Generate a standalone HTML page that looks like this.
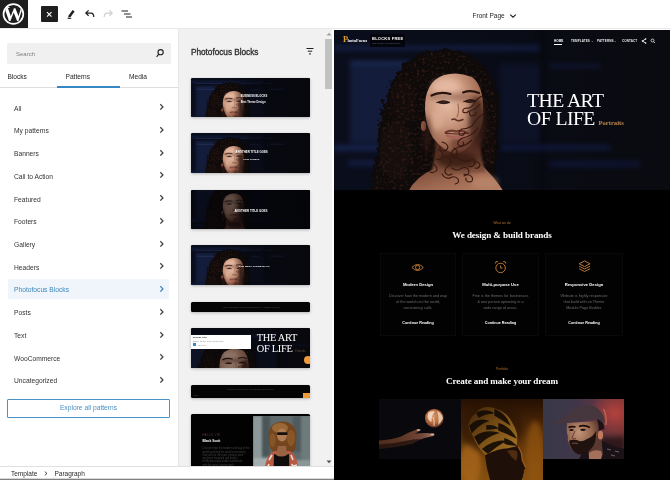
<!DOCTYPE html>
<html><head><meta charset="utf-8">
<style>
*{box-sizing:border-box;margin:0;padding:0}
html{background:#fff}
body{will-change:transform}
html,body{width:670px;height:480px;overflow:hidden;font-family:"Liberation Sans",sans-serif;color:#1e1e1e}
.abs{position:absolute}
#toolbar{position:absolute;left:0;top:0;width:670px;height:29px;background:#fff;border-bottom:1px solid #e9e9e9}
#wp{position:absolute;left:0;top:0;width:28px;height:28px;background:#1e1e1e}
#close{position:absolute;left:41px;top:5.500px;width:16.500px;height:16.500px;background:#1e1e1e;border-radius:1px}
#fp{position:absolute;left:472.500px;top:12.200px;font-size:6.500px;color:#1e1e1e;letter-spacing:0}
#left{position:absolute;left:0;top:30px;width:178px;height:436px;background:#fff}
#search{position:absolute;left:7px;top:12.500px;width:163.500px;height:21px;background:#f0f0f0;border-radius:1px}
#search span{position:absolute;left:9px;top:8px;font-size:6px;color:#808080}
.tab{position:absolute;top:42.600px;font-size:6.600px;color:#1e1e1e}
#tabline{position:absolute;left:0;top:57px;width:178px;height:1px;background:#ddd}
#tabul{position:absolute;left:57px;top:56.200px;width:63px;height:1.600px;background:#3787c2}
.cat{position:absolute;left:14px;width:150px;font-size:6.700px;color:#333;height:10px;line-height:10px}
.chev{position:absolute;left:158px;width:6px;height:8px}
#sel{position:absolute;left:8px;top:248.500px;width:161px;height:20px;background:#eff5fa}
#explore{position:absolute;left:7px;top:369px;width:163px;height:18.500px;border:1px solid #4a93c6;border-radius:1px;font-size:6.700px;color:#4a90c2;text-align:center;line-height:16px}
#pp{position:absolute;left:178px;top:30px;width:154px;height:436px;background:#f1f1f1;border-left:1px solid #e6e6e6;overflow:hidden}
#pp h2{position:absolute;left:12px;top:16.500px;font-size:8.300px;font-weight:normal;color:#2c2c2c;letter-spacing:-.05px;-webkit-text-stroke:.3px #2c2c2c}
.thumb{position:absolute;left:12.300px;width:119px;background:#0a0b10;border-radius:1.5px;overflow:hidden;box-shadow:0 1px 3px rgba(0,0,0,.25)}
#sb{position:absolute;left:145px;top:0;width:9px;height:436px;background:#f1f1f1}
#sbt{position:absolute;left:1px;top:9px;width:7px;height:50px;background:#c1c1c1}
#canvas{position:absolute;left:334px;top:30px;width:336px;height:450px;background:#000;overflow:hidden}
#hero{position:absolute;left:0;top:0;width:336px;height:160px;background:#0a0d18;overflow:hidden}
#foot{position:absolute;left:0;top:466px;width:334px;height:14px;background:#fff;border-top:1px solid #e0e0e0;font-size:6.5px;color:#2a2a2a}
.ht{font-family:"Liberation Serif",serif;font-size:19.700px;line-height:20px;color:#fff;letter-spacing:-.55px;white-space:nowrap}
.nav{top:8.800px;font-size:3px;font-weight:bold;color:#e8e8e8;white-space:nowrap;letter-spacing:.1px}
.ot{font-size:3.050px;color:#bc7634;text-align:center;line-height:4px;letter-spacing:.1px}
.st{font-family:"Liberation Serif",serif;font-weight:bold;font-size:9.150px;line-height:12px;color:#fff;text-align:center;letter-spacing:-.1px;white-space:nowrap}
.card{position:absolute;top:222.500px;height:83px;border:1px solid #090909;background:#020202}
.ct{font-size:4.200px;line-height:6px;font-weight:bold;color:#fff;text-align:center;white-space:nowrap}
.cd{font-size:3.750px;line-height:6.400px;color:#6e6e6e;text-align:center;white-space:nowrap}
.tt{color:#fff;font-weight:bold;white-space:nowrap;letter-spacing:.05px;line-height:4px;text-align:center}
.t6{font-family:"Liberation Serif",serif;font-size:10.400px;line-height:11px;color:#fff;letter-spacing:-.3px;white-space:nowrap}
</style></head><body>
<div id="toolbar">
 <div id="wp"><svg width="28" height="28" viewBox="0 0 28 28"><defs><clipPath id="wc"><circle cx="13.400" cy="14" r="9.300"/></clipPath></defs><circle cx="13.400" cy="14" r="9.900" fill="none" stroke="#fff" stroke-width="1.700"/><text clip-path="url(#wc)" x="13.400" y="21.200" text-anchor="middle" font-family="Liberation Serif, serif" font-weight="bold" font-size="21" fill="#fff">W</text></svg></div>
 <div id="close"><svg width="17" height="17" viewBox="0 0 17 17"><path d="M6 6.200 L10.500 10.700 M10.500 6.200 L6 10.700" stroke="#fff" stroke-width="1.100" fill="none"/></svg></div>
 <svg class="abs" style="left:66px;top:8px" width="10" height="12" viewBox="0 0 10 12"><path d="M2.600 7.400 L6.600 2 L8.600 3.500 L4.600 8.900 L2.200 9.600 Z" fill="#1e1e1e"/><path d="M1.600 10.300 L5.200 10.300" stroke="#1e1e1e" stroke-width="1.100"/></svg>
 <svg class="abs" style="left:84px;top:9px" width="12" height="10" viewBox="0 0 12 10"><path d="M4.6 1.4 L1.8 4.1 L4.6 6.8 M1.8 4.1 L7 4.1 Q9.8 4.3 9.8 8" fill="none" stroke="#1e1e1e" stroke-width="1.2"/></svg>
 <svg class="abs" style="left:102px;top:9px" width="12" height="10" viewBox="0 0 12 10"><path d="M7.4 1.4 L10.2 4.1 L7.4 6.8 M10.2 4.1 L5 4.1 Q2.2 4.3 2.2 8" fill="none" stroke="#cfcfcf" stroke-width="1.2"/></svg>
 <svg class="abs" style="left:120px;top:9px" width="14" height="10" viewBox="0 0 14 10"><path d="M1.5 2 H8 M4 5 H10.5 M6 8 H12" fill="none" stroke="#1e1e1e" stroke-width="1.2"/></svg>
 <svg class="abs" style="left:509px;top:13px" width="8" height="6" viewBox="0 0 8 6"><path d="M1.2 1.6 L4 4.2 L6.8 1.6" fill="none" stroke="#1e1e1e" stroke-width="1.1"/></svg>
 <div id="fp">Front Page</div>
</div>
<div id="left">
 <div id="search"><span>Search</span><svg class="abs" style="left:148px;top:5.500px" width="10" height="10" viewBox="0 0 10 10"><circle cx="5.6" cy="4.2" r="2.6" fill="none" stroke="#1e1e1e" stroke-width="1.1"/><path d="M3.8 6.2 L1.6 8.8" stroke="#1e1e1e" stroke-width="1.1"/></svg></div>
 <div class="tab" style="left:7.500px">Blocks</div>
 <div class="tab" style="left:65.500px">Patterns</div>
 <div class="tab" style="left:129px">Media</div>
 <div id="tabline"></div><div id="tabul"></div>
 <div id="sel"></div>
<div class="cat" style="top:73.6px">All</div>
<svg class="chev" style="top:73.2px" viewBox="0 0 6 8"><path d="M2.300 1.200 L4.900 3.900 L2.300 6.600" fill="none" stroke="#444" stroke-width="1.350"/></svg>
<div class="cat" style="top:96.3px">My patterns</div>
<svg class="chev" style="top:95.9px" viewBox="0 0 6 8"><path d="M2.300 1.200 L4.900 3.900 L2.300 6.600" fill="none" stroke="#444" stroke-width="1.350"/></svg>
<div class="cat" style="top:119.1px">Banners</div>
<svg class="chev" style="top:118.7px" viewBox="0 0 6 8"><path d="M2.300 1.200 L4.900 3.900 L2.300 6.600" fill="none" stroke="#444" stroke-width="1.350"/></svg>
<div class="cat" style="top:141.8px">Call to Action</div>
<svg class="chev" style="top:141.4px" viewBox="0 0 6 8"><path d="M2.300 1.200 L4.900 3.900 L2.300 6.600" fill="none" stroke="#444" stroke-width="1.350"/></svg>
<div class="cat" style="top:164.5px">Featured</div>
<svg class="chev" style="top:164.1px" viewBox="0 0 6 8"><path d="M2.300 1.200 L4.900 3.900 L2.300 6.600" fill="none" stroke="#444" stroke-width="1.350"/></svg>
<div class="cat" style="top:187.3px">Footers</div>
<svg class="chev" style="top:186.8px" viewBox="0 0 6 8"><path d="M2.300 1.200 L4.900 3.900 L2.300 6.600" fill="none" stroke="#444" stroke-width="1.350"/></svg>
<div class="cat" style="top:210.0px">Gallery</div>
<svg class="chev" style="top:209.6px" viewBox="0 0 6 8"><path d="M2.300 1.200 L4.900 3.900 L2.300 6.600" fill="none" stroke="#444" stroke-width="1.350"/></svg>
<div class="cat" style="top:232.7px">Headers</div>
<svg class="chev" style="top:232.3px" viewBox="0 0 6 8"><path d="M2.300 1.200 L4.900 3.900 L2.300 6.600" fill="none" stroke="#444" stroke-width="1.350"/></svg>
<div class="cat" style="top:255.4px;color:#3b86bd">Photofocus Blocks</div>
<svg class="chev" style="top:255.0px" viewBox="0 0 6 8"><path d="M2.300 1.200 L4.900 3.900 L2.300 6.600" fill="none" stroke="#4389bd" stroke-width="1.350"/></svg>
<div class="cat" style="top:278.2px">Posts</div>
<svg class="chev" style="top:277.8px" viewBox="0 0 6 8"><path d="M2.300 1.200 L4.900 3.900 L2.300 6.600" fill="none" stroke="#444" stroke-width="1.350"/></svg>
<div class="cat" style="top:300.9px">Text</div>
<svg class="chev" style="top:300.5px" viewBox="0 0 6 8"><path d="M2.300 1.200 L4.900 3.900 L2.300 6.600" fill="none" stroke="#444" stroke-width="1.350"/></svg>
<div class="cat" style="top:323.6px">WooCommerce</div>
<svg class="chev" style="top:323.2px" viewBox="0 0 6 8"><path d="M2.300 1.200 L4.900 3.900 L2.300 6.600" fill="none" stroke="#444" stroke-width="1.350"/></svg>
<div class="cat" style="top:346.4px">Uncategorized</div>
<svg class="chev" style="top:346.0px" viewBox="0 0 6 8"><path d="M2.300 1.200 L4.900 3.900 L2.300 6.600" fill="none" stroke="#444" stroke-width="1.350"/></svg>
 <div id="explore">Explore all patterns</div>
</div>
<div class="abs" style="left:178px;top:29px;width:154px;height:1px;background:#f1f1f1;border-left:1px solid #e6e6e6"></div>
<div id="pp">
 <h2>Photofocus Blocks</h2>
 <svg class="abs" style="left:126px;top:17px" width="10" height="9" viewBox="0 0 10 9"><path d="M1.5 1.5 H8.5 M2.8 4.2 H7.2 M4 6.9 H6" stroke="#1e1e1e" stroke-width="1" fill="none"/></svg>
<div class="thumb" style="top:47.5px;height:39.500px"><svg class="abs" style="left:0;top:0" width="119" height="40" viewBox="0 0 119 40"><use href="#himg" transform="translate(-1,-2.500) scale(.36)"/><g opacity=".35" stroke="#3a4a80" stroke-width=".8"><path d="M4 5.500 H32 M50 5.500 H70 M74 5.500 H82 M6 11.500 H24 M60 11.500 H68 M80 11.500 H92"/></g><rect x="42" width="77" height="40" fill="url(#tov)"/></svg><div class="abs tt" style="left:49.2px;top:17px;font-size:2.7px;width:27px">BUSINESS BLOCKS</div><div class="abs tt" style="left:47.8px;top:23.5px;font-size:2.600px;width:28px">Best Theme Design</div></div>
<div class="thumb" style="top:103.4px;height:39.500px"><svg class="abs" style="left:0;top:0" width="119" height="40" viewBox="0 0 119 40"><use href="#himg" transform="translate(-1,-2.500) scale(.36)"/><g opacity=".35" stroke="#3a4a80" stroke-width=".8"><path d="M4 5.500 H32 M50 5.500 H70 M74 5.500 H82 M6 11.500 H24 M60 11.500 H68 M80 11.500 H92"/></g><rect x="42" width="77" height="40" fill="url(#tov)"/></svg><div class="abs tt" style="left:44.3px;top:16.6px;font-size:2.8px;width:32px">ANOTHER TITLE GOES</div><div class="abs tt" style="left:51px;top:24.3px;font-size:2.500px;width:18px">View Promos</div></div>
<div class="thumb" style="top:159.5px;height:39.500px"><svg class="abs" style="left:0;top:0" width="119" height="40" viewBox="0 0 119 40"><use href="#himg" transform="translate(-1,-12) scale(.36)"/><rect x="42" width="77" height="40" fill="url(#tov)"/><rect width="119" height="40" fill="#040407" opacity="0.6"/></svg><div class="abs tt" style="left:42.7px;top:19.9px;font-size:2.9px;width:34px">ANOTHER TITLE GOES</div></div>
<div class="thumb" style="top:215.4px;height:39.500px"><svg class="abs" style="left:0;top:0" width="119" height="40" viewBox="0 0 119 40"><use href="#himg" transform="translate(-1,-2.500) scale(.36)"/><g opacity=".35" stroke="#3a4a80" stroke-width=".8"><path d="M4 5.500 H32 M50 5.500 H70 M74 5.500 H82 M6 11.500 H24 M60 11.500 H68 M80 11.500 H92"/></g><rect x="42" width="77" height="40" fill="url(#tov)"/></svg><div class="abs tt" style="left:47.8px;top:20.1px;font-size:2.5px;width:28px">THE BEST THEME BLOG</div></div>
<div class="thumb" style="top:272px;height:9.700px;background:#040404"><div class="abs tt" style="left:32px;top:2.700px;width:55px;font-size:2.200px;color:#555;font-weight:normal;letter-spacing:.1px">Copyright 2024 Photofocus Blocks All rights reserved</div></div>
<div class="thumb" style="top:298px;height:40px"><svg class="abs" style="left:0;top:0" width="119" height="40" viewBox="0 0 119 40"><use href="#himg" transform="translate(-17,-1) scale(.5)"/><rect width="119" height="40" fill="#050508" opacity=".4"/></svg>
<div class="abs" style="left:0;top:6.500px;width:59.500px;height:14.800px;background:#fff"></div>
<div class="abs" style="left:1.500px;top:7.500px;font-size:2.400px;color:#333;font-weight:bold">Display Title</div>
<div class="abs" style="left:1.500px;top:11.500px;font-size:2px;color:#888">Display the title of the current page</div>
<div class="abs" style="left:1.500px;top:15.200px;width:3px;height:3px;background:#2a8fd0"></div>
<div class="abs" style="left:6.500px;top:15.500px;font-size:2px;color:#999">Block title</div>
<div class="abs t6" style="left:65.500px;top:4.200px">THE ART</div>
<div class="abs t6" style="left:65.500px;top:14.700px">OF LIFE</div>
<div class="abs" style="left:104px;top:20.500px;font-family:'Liberation Serif',serif;font-size:3px;color:#6a5240">Portraits</div>
<div class="abs" style="left:113px;top:27.500px;width:8px;height:8px;border-radius:4px;background:#f09a3a"></div></div>
<div class="thumb" style="top:354.800px;height:13px;background:#040404"><div class="abs tt" style="left:34.500px;top:2.500px;width:49px;font-size:2.200px;color:#555;font-weight:normal;letter-spacing:.1px">Proudly powered by WordPress Photofocus</div><div class="abs" style="left:1.500px;top:9px;font-size:2px;color:#555">Home</div><div class="abs" style="left:111.500px;top:8px;width:8px;height:5px;background:#f09a3a"></div></div>
<div class="thumb" style="top:384px;height:60px;background:#020202">
<div class="abs" style="left:11.200px;top:19.200px;font-size:2.800px;line-height:4px;color:#7a3a3a;letter-spacing:.3px">HELLO, I'M</div>
<div class="abs" style="left:11.200px;top:25px;font-size:3.300px;line-height:5px;color:#fff;font-weight:bold">Black Scott</div>
<div class="abs" style="left:11.200px;top:33.400px;font-size:2.600px;line-height:3.250px;color:#444;white-space:nowrap">Discover how the modern and way of the<br>world can bring the world consistency<br>that calls for the most creative work<br>you have imagined and build it<br>on Module page builder and blocks<br>with the most creative work.</div>
<svg class="abs" style="left:61.500px;top:2px" width="58" height="58" viewBox="0 0 58 58" color-interpolation-filters="sRGB"><rect width="58" height="58" fill="#5e6a6c"/>
<g filter="url(#b1)"><rect x="0" y="0" width="9" height="58" fill="#8c9899"/><rect x="9" y="0" width="8" height="40" fill="#4a5658"/><rect x="40" y="0" width="8" height="36" fill="#4e5a5c"/><rect x="48" y="0" width="10" height="58" fill="#6e7a7c"/><rect x="0" y="42" width="20" height="16" fill="#a4aeb0"/><rect x="42" y="44" width="16" height="14" fill="#8a9698"/></g>
<g filter="url(#b05)">
<path d="M16 22 Q14 10 24 6.500 Q32 4 38 8 Q45 13 43 24 Q44 32 40 36 L20 36 Q15 30 16 22 Z" fill="#74461f"/>
<ellipse cx="27" cy="12" rx="8" ry="5" fill="#a4703a" opacity=".8"/><ellipse cx="38" cy="22" rx="4" ry="8" fill="#8e5a2a" opacity=".8"/><ellipse cx="19.500" cy="24" rx="3" ry="7" fill="#8e5a2a" opacity=".7"/>
<path d="M11 58 Q12 40 21 35 L37 35 Q45 40 46 58 Z" fill="#b85a42"/>
<path d="M13 56 l3 -8 M16 44 l3 -5 M41 56 l-2 -8 M40 44 l-2 -5 M14 50 l4 2 M40 50 l4 -1" stroke="#ecdcd0" stroke-width="1.600" fill="none"/>
<path d="M20.500 58 L21 38 Q28 41 36 38 L36.500 58 Z" fill="#100c0c"/>
<path d="M25 30 L33 30 L34 39 Q28 42 23 39 Z" fill="#9a6444"/>
<ellipse cx="29" cy="19" rx="5" ry="6.500" fill="#b07c56"/>
<rect x="24" y="16.200" width="10.500" height="2.800" rx="1.200" fill="#140e0c"/>
</g></svg></div>
 <div id="sb"><div id="sbt"></div><svg class="abs" style="left:1.500px;top:2px" width="6" height="4" viewBox="0 0 6 4"><path d="M.5 3.500 L3 .8 L5.500 3.500 Z" fill="#a0a0a0"/></svg><svg class="abs" style="left:1.500px;top:429.500px" width="6" height="4" viewBox="0 0 6 4"><path d="M.5 .5 L3 3.200 L5.500 .5 Z" fill="#505050"/></svg></div>
</div>
<div id="canvas">
 <div id="hero">
<svg class="abs" style="left:0;top:0" width="336" height="160" viewBox="0 0 336 160" color-interpolation-filters="sRGB">
<defs>
<filter id="b05" x="-30%" y="-30%" width="160%" height="160%"><feGaussianBlur stdDeviation=".6"/></filter>
<filter id="b07" x="-30%" y="-30%" width="160%" height="160%"><feGaussianBlur stdDeviation=".8"/></filter>
<filter id="b1" x="-30%" y="-30%" width="160%" height="160%"><feGaussianBlur stdDeviation="1.2"/></filter>
<filter id="b2" x="-30%" y="-30%" width="160%" height="160%"><feGaussianBlur stdDeviation="2.5"/></filter>
<filter id="b4" x="-30%" y="-30%" width="160%" height="160%"><feGaussianBlur stdDeviation="5"/></filter>
<filter id="htx" x="0" y="0" width="100%" height="100%"><feTurbulence type="fractalNoise" baseFrequency=".35" numOctaves="2" seed="11" result="n"/><feColorMatrix in="n" type="matrix" values="0 0 0 0 .26  0 0 0 0 .14  0 0 0 0 .1  2.200 0 0 0 -1.150" result="c"/><feComposite in="c" in2="SourceGraphic" operator="in"/><feGaussianBlur stdDeviation=".45"/></filter>
<filter id="curl" x="-10%" y="-10%" width="120%" height="120%"><feTurbulence type="fractalNoise" baseFrequency=".22" numOctaves="2" seed="4" result="n"/><feDisplacementMap in="SourceGraphic" in2="n" scale="9"/><feGaussianBlur stdDeviation=".7"/></filter>
<linearGradient id="tov" x1="0" x2="1"><stop offset="0" stop-color="#06070c" stop-opacity="0"/><stop offset=".25" stop-color="#06070c" stop-opacity=".55"/><stop offset="1" stop-color="#06070c" stop-opacity=".6"/></linearGradient><linearGradient id="hbg" x1="0" x2="1" y1="0" y2="0"><stop offset="0" stop-color="#0a0e1c"/><stop offset=".5" stop-color="#090c17"/><stop offset=".75" stop-color="#0a0b12"/><stop offset="1" stop-color="#0a0b10"/></linearGradient>
<radialGradient id="skin" cx=".38" cy=".32" r=".78"><stop offset="0" stop-color="#ecc4ae"/><stop offset=".4" stop-color="#cc9a80"/><stop offset=".8" stop-color="#97634b"/><stop offset="1" stop-color="#64392a"/></radialGradient>
<linearGradient id="nk" x1="0" x2="0" y1="0" y2="1"><stop offset="0" stop-color="#40221a"/><stop offset=".5" stop-color="#5a3224"/><stop offset="1" stop-color="#8a5a44"/></linearGradient><linearGradient id="sh" x1="0" x2="1" y1="0" y2="1"><stop offset="0" stop-color="#6a3e2e"/><stop offset=".55" stop-color="#a06a52"/><stop offset="1" stop-color="#b88468"/></linearGradient>
</defs>
<g id="himg">
<rect width="336" height="160" fill="url(#hbg)"/>
<g filter="url(#b2)">
<rect x="16" y="31" width="60" height="82" fill="#131c3a"/>
<rect x="16" y="31" width="60" height="4" fill="#1c2a54"/>
<rect x="0" y="15.500" width="210" height="5" fill="#131d40"/>
<rect x="0" y="115" width="56" height="6" fill="#16224a"/>
<rect x="14" y="130" width="36" height="6" fill="#121c3e"/>
<rect x="166" y="34" width="40" height="78" fill="#0d1226"/>
<rect x="206" y="0" width="5" height="160" fill="#07080e"/>
<rect x="216" y="34" width="50" height="4" fill="#10183a" opacity=".8"/>
<rect x="166" y="115" width="110" height="5" fill="#111a40" opacity=".9"/>
<rect x="216" y="131" width="90" height="6" fill="#0f173a" opacity=".8"/>
</g>
<g filter="url(#curl)">
<path d="M100 20 Q128 16 148 34 Q166 52 165 84 Q166 120 160 150 L150 162 L36 162 Q38 140 44 120 Q42 96 50 72 Q58 44 76 30 Q88 22 100 20 Z" fill="#0f0a0a"/>
<ellipse cx="62" cy="120" rx="16" ry="30" fill="#160e0c"/>
<ellipse cx="70" cy="70" rx="12" ry="22" fill="#140c0b"/>
<ellipse cx="152" cy="110" rx="8" ry="30" fill="#120b0a"/>
</g>
<g filter="url(#htx)"><path d="M100 22 Q128 18 146 36 Q163 54 162 84 Q163 120 158 150 L150 162 L40 162 Q41 140 47 120 Q45 96 53 72 Q60 46 78 32 Q88 24 100 22 Z" fill="#000"/></g>
<g filter="url(#b05)">
<path d="M74 162 Q82 146 100 139 L146 134 Q160 146 170 162 Z" fill="url(#sh)"/>
<path d="M101 108 L146 104 Q146 130 152 142 L96 146 Q102 130 101 108 Z" fill="url(#nk)" filter="url(#b1)"/>
<path d="M91 80 Q90 52 110 45 Q124 41 138 47 Q150 56 149 82 Q149 100 140 111 Q130 123 122 123.500 Q110 122 99 108 Q92 96 91 80 Z" fill="url(#skin)"/>
<ellipse cx="89.500" cy="96" rx="2.500" ry="5" fill="#9a6048"/>
</g>
<g filter="url(#b2)">
<ellipse cx="112" cy="56" rx="14" ry="7" fill="#e8bca6" opacity=".7"/>
<ellipse cx="103" cy="90" rx="7" ry="10" fill="#e0b098" opacity=".6"/>
<ellipse cx="143" cy="92" rx="8" ry="26" fill="#3a1e16" opacity=".8"/>
<ellipse cx="130" cy="114" rx="14" ry="8" fill="#5a3024" opacity=".55"/>
<ellipse cx="123" cy="130" rx="20" ry="8" fill="#341a12" opacity=".8"/>
<ellipse cx="93" cy="104" rx="4" ry="18" fill="#3a1e16" opacity=".55"/>
<ellipse cx="120" cy="67" rx="26" ry="4" fill="#7a4a38" opacity=".5"/>
<ellipse cx="150" cy="152" rx="14" ry="6" fill="#c08c70" opacity=".6"/>
</g>
<g filter="url(#b05)" fill="none" stroke-linecap="round">
<path d="M97.500 65.500 q8 -4.500 19 -1.500" stroke="#2a1510" stroke-width="2.200"/>
<path d="M129 62.500 q8 -3 16 .5" stroke="#2a1510" stroke-width="2.100"/>
<path d="M103 72.500 q6 -3.500 13 0 q-6 2.500 -13 0 Z" fill="#3a221c" stroke="#24120e" stroke-width=".9"/>
<path d="M130 71.500 q6 -3.500 12 -.5 q-6 3 -12 .5 Z" fill="#3a221c" stroke="#24120e" stroke-width=".9"/>
<path d="M124 74 q1.500 8 -1 13" stroke="#a06850" stroke-width="1.100"/>
<path d="M118 89.500 q3 -1 4 .5 q3 1.500 7 -.5" stroke="#5e3024" stroke-width="1.500"/>
<path d="M111.500 102.500 q5 -3 10.500 -1 q6 -2 12 1.500" stroke="#6e3a32" stroke-width="2.200"/>
<path d="M113 105.500 q9 4.500 19 .5" stroke="#a86458" stroke-width="3"/>
<path d="M111.500 103.300 q11 1.500 22.500 0" stroke="#4a201c" stroke-width=".9"/>
</g>
<g filter="url(#b05)" fill="none" stroke="#38180f" stroke-linecap="round" stroke-width="1.100">
<path d="M148 66 q-6 3 -9 9 q-3 4 -7 3 q-4 1 -3 4 q3 2 6 -1"/>
<path d="M146 74 q-4 6 -9 6 q-3 3 0 6 q5 0 5 -4"/>
<path d="M149 84 q-7 5 -11 12 q-5 3 -10 3 q-5 3 -2 6 q4 1 5 -3"/>
<path d="M144 98 q-5 7 -12 9 q-6 1 -8 5 q-1 4 3 4 q4 -1 2 -4"/>
<path d="M138 110 q-6 6 -13 7 q-6 2 -8 6 q-1 5 4 5 q4 -2 2 -5"/>
<path d="M108 112 q5 1 6 5 q-1 4 -5 4 q-4 -1 -3 -4"/>
<path d="M104 120 q6 2 5 7 q-3 4 -7 2"/>
<path d="M112 126 q7 3 4 9 q-5 2 -5 7 q2 5 7 2"/>
<path d="M124 128 q7 5 12 2 q5 -2 5 3 q-2 5 -7 3"/>
<path d="M118 138 q5 4 10 0 q5 -2 7 3 q0 5 -5 3"/>
<path d="M108 144 q3 5 8 4 q5 -3 8 1 q2 4 -3 5"/>
<path d="M98 134 q5 1 5 6 q-3 4 -7 2"/>
<path d="M130 146 q5 -3 8 1 q2 5 -3 5 q-4 -1 -3 -4"/>
<path d="M140 132 q5 -1 6 3 q-1 4 -5 3"/>
<path d="M120 118 q4 2 3 6 q-3 3 -6 1"/>
</g>
</g>
</svg>
<div class="abs ht" style="left:193px;top:60px">THE ART</div>
<div class="abs ht" style="left:193px;top:78.200px">OF LIFE</div>
<div class="abs" style="left:264.5px;top:89px;font-family:'Liberation Serif',serif;font-size:6.600px;color:#c08a52;font-weight:bold">Portraits</div>
<div class="abs" style="left:9px;top:5.300px;font-family:'Liberation Serif',serif;font-size:8.400px;line-height:9px;color:#e0a030;font-weight:bold">P</div>
<div class="abs" style="left:13.500px;top:7.500px;font-family:'Liberation Serif',serif;font-size:4.500px;color:#fff;font-weight:bold">hotoFocus</div>
<div class="abs" style="left:36px;top:4px;width:35px;height:12.500px;background:#030408;opacity:.85"></div>
<div class="abs" style="left:38px;top:5.5px;font-size:4px;color:#fff;font-weight:bold;letter-spacing:.25px">BLOCKS FREE</div>
<div class="abs" style="left:38px;top:11.5px;font-size:2.200px;color:#56648a;letter-spacing:.05px">Just another WordPress site</div>
<div class="abs nav" style="left:220px;color:#fff">HOME</div>
<div class="abs" style="left:220px;top:14px;width:7.500px;height:.8px;background:#fff"></div>
<div class="abs nav" style="left:237px">TEMPLATES ⌄</div>
<div class="abs nav" style="left:263px">PATTERNS ⌄</div>
<div class="abs nav" style="left:288px">CONTACT</div>
<svg class="abs" style="left:306.800px;top:7.800px" width="6" height="6" viewBox="0 0 6 6"><path d="M4.5 1 L1.5 3 L4.5 5" stroke="#fff" stroke-width=".9" fill="none"/><circle cx="4.6" cy="1" r=".8" fill="#fff"/><circle cx="1.4" cy="3" r=".8" fill="#fff"/><circle cx="4.6" cy="5" r=".8" fill="#fff"/></svg>
<svg class="abs" style="left:316.300px;top:7.800px" width="6" height="6" viewBox="0 0 6 6"><circle cx="2.5" cy="2.5" r="1.5" stroke="#fff" stroke-width=".7" fill="none"/><path d="M3.6 3.6 L5 5" stroke="#fff" stroke-width=".7"/></svg>
</div>

<div class="abs ot" style="left:118px;top:191px;width:100px">What we do</div>
<div class="abs st" style="left:68px;top:199px;width:200px">We design &amp; build brands</div>
<div class="card" style="left:46px;width:76px"></div>
<div class="card" style="left:128px;width:77px"></div>
<div class="card" style="left:211px;width:78px"></div>
<svg class="abs" style="left:77px;top:231.600px" width="13.200" height="11" viewBox="0 0 12 10"><path d="M.8 5 Q6 -.5 11.200 5 Q6 10.500 .8 5 Z" fill="none" stroke="#bc7634" stroke-width=".9"/><circle cx="6" cy="5" r="1.900" fill="none" stroke="#bc7634" stroke-width=".9"/></svg>
<svg class="abs" style="left:160.400px;top:229.800px" width="13.200" height="14.300" viewBox="0 0 12 13"><circle cx="6" cy="7.200" r="4.300" fill="none" stroke="#bc7634" stroke-width=".9"/><path d="M1.200 3.200 Q1.200 .8 3.600 1.400 M10.800 3.200 Q10.800 .8 8.400 1.400 M6 5 V7.400 H7.800" fill="none" stroke="#bc7634" stroke-width=".9"/></svg>
<svg class="abs" style="left:244.400px;top:230.400px" width="13.200" height="13.200" viewBox="0 0 12 12"><path d="M6 .8 L11 3.400 L6 6 L1 3.400 Z M1 5.600 L6 8.200 L11 5.600 M1 7.900 L6 10.500 L11 7.900" fill="none" stroke="#bc7634" stroke-width=".9" stroke-linejoin="round"/></svg>
<div class="abs ct" style="left:46px;top:252px;width:76px">Modern Design</div>
<div class="abs ct" style="left:128px;top:252px;width:77px">Multi-purpose Use</div>
<div class="abs ct" style="left:211px;top:252px;width:78px">Responsive Design</div>
<div class="abs cd" style="left:46px;top:262.500px;width:76px">Discover how the modern and way<br>of the world can the world,<br>consistency calls.</div>
<div class="abs cd" style="left:128px;top:262.500px;width:77px">Fine is the themes for businesses<br>&amp; one person operating in a<br>wide range of areas.</div>
<div class="abs cd" style="left:211px;top:262.500px;width:78px">Website is highly responsive<br>that build with on Theme<br>Module Page Builder.</div>
<div class="abs ct" style="left:46px;top:290px;width:76px;font-size:3.700px">Continue Reading</div>
<div class="abs ct" style="left:128px;top:290px;width:77px;font-size:3.700px">Continue Reading</div>
<div class="abs ct" style="left:211px;top:290px;width:78px;font-size:3.700px">Continue Reading</div>
<div class="abs ot" style="left:118px;top:337px;width:100px">Portfolio</div>
<div class="abs st" style="left:68px;top:344.700px;width:200px">Create and make your dream</div>
<div id="im1" class="abs" style="left:45px;top:369px;width:82px;height:59.500px;background:#0b0b12;overflow:hidden"><svg width="82" height="60" viewBox="0 0 82 60" color-interpolation-filters="sRGB"><defs><radialGradient id="ball" cx=".45" cy=".4" r=".62"><stop offset="0" stop-color="#d89868"/><stop offset=".6" stop-color="#b86a3e"/><stop offset="1" stop-color="#5a2e1c"/></radialGradient><linearGradient id="hand" x1="0" x2="1"><stop offset="0" stop-color="#4e2c1e"/><stop offset=".4" stop-color="#5c3624"/><stop offset=".8" stop-color="#74483a"/><stop offset="1" stop-color="#a87c66"/></linearGradient></defs>
<rect width="82" height="60" fill="#09090d"/>
<g filter="url(#b05)">
<path d="M0 41.500 Q12 41 22 37.500 Q28 34 35 31.500 Q39.500 30 41 31 Q40 33 35 34.800 Q44 33.500 54.500 34.500 Q56 36 54 37 Q46 38.500 40 41 Q34 45 24 46.500 Q12 49 0 49.500 Z" fill="url(#hand)"/>
<path d="M0 45.500 Q14 45 26 42 Q34 40 42 40 Q33 45.500 22 47 Q10 49.500 0 49.500 Z" fill="#20100c" opacity=".8"/>
<ellipse cx="39.500" cy="31" rx="2" ry="1" fill="#c8a088"/><ellipse cx="53.500" cy="35.600" rx="2" ry="1" fill="#d0a890"/>
<circle cx="55.300" cy="19.200" r="9.300" fill="url(#ball)"/>
<path d="M49.500 13.500 Q53 11.500 56 12.500 Q52 17 52.500 23 Q49 21 48.500 17.500 Z" fill="#f0dcc8" opacity=".9"/>
<path d="M58 12 Q63 14 64 19.500 Q62 24 59 26 Q60.500 19 58 12 Z" fill="#ecd6c0" opacity=".85"/>
<path d="M54 18 Q56 22 55 27" stroke="#f0dcc8" stroke-width="1.200" fill="none" opacity=".7"/>
</g></svg></div>
<div id="im2" class="abs" style="left:127px;top:369px;width:81.600px;height:81px;background:#6a3a0e;overflow:hidden"><svg width="82" height="81" viewBox="0 0 82 81" color-interpolation-filters="sRGB"><defs><linearGradient id="obg" x1="0" x2="0" y1="0" y2="1"><stop offset="0" stop-color="#241003"/><stop offset=".3" stop-color="#472407"/><stop offset=".7" stop-color="#70400d"/><stop offset="1" stop-color="#85500f"/></linearGradient><linearGradient id="wrp" x1="0" x2="1" y1="0" y2="1"><stop offset="0" stop-color="#3a2208"/><stop offset=".5" stop-color="#7a5016"/><stop offset="1" stop-color="#a87628"/></linearGradient></defs>
<rect width="82" height="81" fill="url(#obg)"/>
<g filter="url(#b2)"><ellipse cx="9" cy="66" rx="11" ry="22" fill="#a8661a" opacity=".8"/><ellipse cx="74" cy="54" rx="9" ry="32" fill="#94560f" opacity=".7"/><ellipse cx="30" cy="28" rx="32" ry="26" fill="#2a1404" opacity=".55"/></g>
<g filter="url(#b05)">
<path d="M24 56 Q34 48 46 48 Q54 46 57 47.500 Q60 52 60.500 54.500 Q61 58 61.400 61.600 Q63.500 65 64.500 68.700 Q64 70.500 62.600 71.500 Q63.500 73.500 62.200 75 Q62.500 78 60.500 81 L29 81 Q25 68 24 56 Z" fill="#1e1008"/>
<path d="M57 47.500 Q60 52 60.500 54.500 Q61 58 61.400 61.600 Q63.500 65 64.500 68.700" stroke="#9a5a20" stroke-width="1.300" fill="none"/>
<path d="M46 52 Q52 50 56 52.500 Q57 58 55 62 Q50 58 46 52 Z" fill="#5a3214" opacity=".8"/>
<path d="M7.300 26 Q9 18 13.500 15.500 Q17 10 22.400 8.400 Q28 7.500 33 9.300 Q40 11 45.400 15.500 Q50 20 52.500 26 Q55 30 56 35 Q57 42 55.100 47.400 Q51 48 47.200 49.200 Q42 49.500 36.500 51 Q30 53 24.100 56.300 Q20 52 17 47.400 Q13.500 42 11.700 36.800 Q8 32 7.300 26 Z" fill="url(#wrp)"/>
<path d="M9 27 Q16 19 26 22 Q18 25 11 33 Z M16 14 Q24 10 32 14 Q24 14 18 18 Z M34 11 Q44 15 48 25 Q41 20 34 16 Z M14 38 Q24 31 36 34 Q26 37 18 45 Z M38 25 Q48 28 54 38 Q46 34 38 31 Z M22 50 Q32 42 44 42 Q36 46 27 54 Z M44 40 Q50 42 54 46 Q48 46 44 44 Z M26 27 Q32 26 36 29 Q30 30 26 30 Z" fill="#150c05" opacity=".92" stroke="#150c05" stroke-width="1.500"/>
</g></svg></div>
<div id="im3" class="abs" style="left:208.600px;top:369px;width:81.400px;height:59.500px;background:#3a3040;overflow:hidden"><svg width="82" height="60" viewBox="0 0 82 60" color-interpolation-filters="sRGB"><defs><linearGradient id="mbg" x1="0" x2="1"><stop offset="0" stop-color="#383848"/><stop offset=".4" stop-color="#40364a"/><stop offset=".7" stop-color="#5e3440"/><stop offset="1" stop-color="#6e3030"/></linearGradient><radialGradient id="mglow" cx=".5" cy=".5" r=".5"><stop offset="0" stop-color="#b4423c"/><stop offset="1" stop-color="#b4423c" stop-opacity="0"/></radialGradient><radialGradient id="mskin" cx=".4" cy=".35" r=".75"><stop offset="0" stop-color="#c09478"/><stop offset=".55" stop-color="#94644e"/><stop offset="1" stop-color="#4a2c24"/></radialGradient></defs>
<rect width="82" height="60" fill="url(#mbg)"/>
<ellipse cx="72" cy="14" rx="26" ry="24" fill="url(#mglow)"/>
<g filter="url(#b2)"><rect x="58" y="38" width="24" height="22" fill="#241418" opacity=".85"/></g>
<g filter="url(#b05)">
<path d="M36 60 Q40 50 50 46 L60 42 Q70 48 82 50 L82 60 Z" fill="#1a1216"/>
<path d="M44 40 L58 36 L60 56 L46 60 Z" fill="#5a3a30"/>
<path d="M24 24 Q23 32 25 38 Q24 42 26 44 Q28 53 36 55 Q46 53 52 44 Q56 34 54 22 Z" fill="url(#mskin)"/>
<path d="M26 42 Q28 40 34 41 Q38 44 44 40 Q50 38 53 32 Q54 44 48 50 Q42 56 36 55.500 Q28 53 26 42 Z" fill="#20120f"/>
<path d="M12 22.500 Q20 20 26 14 Q34 5 48 6.500 Q60 9 62 24 Q52 19 40 21 Q28 23 14 25 Z" fill="#46363e"/>
<path d="M54 20 Q61 22 61.500 30 Q58 30 56 34 Q56 26 54 20 Z" fill="#1c1214"/>
<ellipse cx="57.500" cy="36" rx="2.600" ry="4.500" fill="#c07a5c"/>
<path d="M60.500 10 Q64 16 63 26" stroke="#c8705a" stroke-width="1.400" fill="none" opacity=".8"/>
<path d="M25.500 28.500 q3 -1.500 7 -.5 M36 27.500 q5 -2 11 1" stroke="#1a0e0c" stroke-width="1.700" fill="none"/>
<ellipse cx="28.500" cy="31" rx="2.200" ry="1" fill="#1a0e0c"/><ellipse cx="40" cy="30.800" rx="2.800" ry="1.100" fill="#1a0e0c"/><path d="M32 32 q-2.500 5 -3 7 q2 1.500 4 .5" stroke="#6a4032" stroke-width="1" fill="none"/><path d="M29 44.500 q3 -1 6 0" stroke="#7a4a40" stroke-width="1.200" fill="none"/>
<path d="M46 54 Q50 50 58 52 Q60 56 58 60 L46 60 Z" fill="#a4705a"/>
<path d="M64 50 l4 1 M72 52 l4 1 M68 56 l4 1" stroke="#6a5a5c" stroke-width="1.200"/>
</g></svg></div>
</div>
<div id="foot"><span class="abs" style="left:11px;top:2.500px">Template</span><svg class="abs" style="left:44px;top:4px" width="4" height="5" viewBox="0 0 4 5"><path d="M.8 .6 L3 2.500 L.8 4.400" fill="none" stroke="#333" stroke-width=".9"/></svg><span class="abs" style="left:54.500px;top:2.500px">Paragraph</span><div class="abs" style="left:0;top:11px;width:334px;height:1px;background:#d8d8d8"></div><div class="abs" style="left:0;top:12px;width:334px;height:1px;background:#808080"></div></div>
</body></html>
